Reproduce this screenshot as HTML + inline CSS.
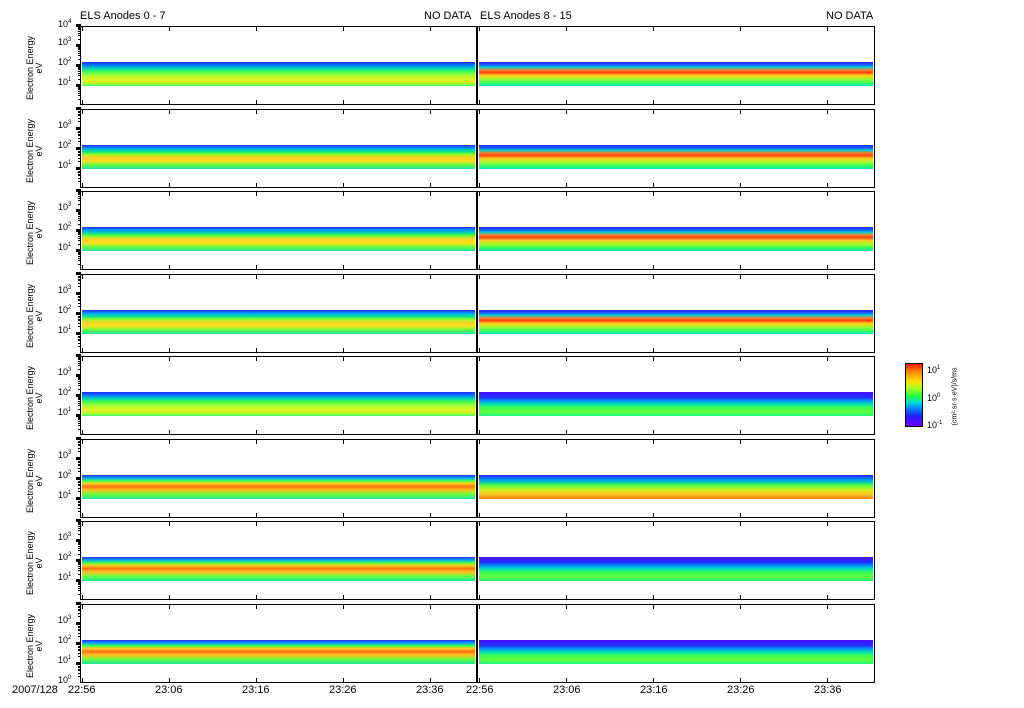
<!DOCTYPE html>
<html><head><meta charset="utf-8">
<style>
body{margin:0;background:#fff;width:1024px;height:708px;position:relative;overflow:hidden;font-family:"Liberation Sans",sans-serif;color:#000}
.p{position:absolute;border:1px solid #000;box-sizing:border-box;background:#fff}
.b{position:absolute;left:1px;right:1px}
.t{position:absolute;font-size:11px;white-space:nowrap}
.tk{position:absolute;background:#000}
.yl{position:absolute;font-size:9px;transform:rotate(-90deg);transform-origin:center;white-space:nowrap;text-align:center;line-height:9px}
.lab{position:absolute;font-size:9px}
.lab sup{font-size:6px}
</style></head><body>
<div class="t" style="left:80px;top:10px">ELS Anodes 0 - 7</div>
<div class="t" style="left:424px;top:10px">NO DATA</div>
<div class="t" style="left:480px;top:10px">ELS Anodes 8 - 15</div>
<div class="t" style="left:826px;top:10px">NO DATA</div>
<div id="c"></div>
<div class="t" style="left:12px;top:684px">2007/128</div>
<div style="position:absolute;left:905px;top:363px;width:18px;height:64px;border:1px solid #000;box-sizing:border-box;background:linear-gradient(#ff1a00,#ff8000 12%,#ffe000 28%,#a0ff20 40%,#20ff40 52%,#00e0d0 62%,#0080ff 72%,#2020ff 84%,#7000ff)"></div>
<div class="lab" style="left:927px;top:365px">10<sup>1</sup></div>
<div class="lab" style="left:927px;top:393px">10<sup>0</sup></div>
<div class="lab" style="left:927px;top:420px">10<sup>-1</sup></div>
<div class="yl" style="left:900px;top:392px;width:110px;font-size:7px">(cm²·sr·s·eV)/s/ms</div>
<script>
var c=document.getElementById('c'),h='';
var L='linear-gradient(#2a2aff,#0080ff 14%,#00d0c0 26%,#40ff50 40%,#b0ff30 58%,#e8f020 78%,#a0ff30 92%,#30f080)';
var LY='linear-gradient(#2a2aff,#00a0ff 14%,#00e090 26%,#80ff30 38%,#ffd020 52%,#ffe020 66%,#60ff40 84%,#20e0a0)';
var LR='linear-gradient(#2a2aff,#00a0ff 12%,#40ff50 24%,#ffd020 36%,#ff7010 48%,#ffc020 62%,#60ff40 82%,#20e0a0)';
var RR='linear-gradient(#3020ff,#1060ff 12%,#00d0d0 22%,#ff8020 34%,#ff4010 44%,#ffd020 56%,#90ff30 74%,#30ff60 88%,#00e0c0)';
var RB='linear-gradient(#5010ff,#2030ff 22%,#0090ff 36%,#00e0b0 50%,#40ff50 66%,#60ff40 84%,#20f080)';
var RY='linear-gradient(#3020ff,#0080ff 16%,#00d0b0 30%,#60ff40 44%,#d0f020 62%,#ffc020 82%,#ff8010)';
var lg=[L,LY,LY,LY,L,LR,LR,LR], rg=[RR,RR,RR,RR,RB,RY,RB,RB];
var times=['22:56','23:06','23:16','23:26','23:36'];
for(var i=0;i<8;i++){
 var py=26+i*82.5, H=79;
 [[80,397,lg[i]],[477,398,rg[i]]].forEach(function(a,k){
  h+='<div class="p" style="left:'+a[0]+'px;top:'+py+'px;width:'+a[1]+'px;height:'+H+'px">';
  h+='<div class="b" style="top:35px;height:24px;background:'+a[2]+'"></div>';
  h+='</div>';
  for(var j=0;j<5;j++){var x=a[0]+2+j*87;
   h+='<div class="tk" style="left:'+x+'px;top:'+py+'px;width:1px;height:5px"></div>';
   h+='<div class="tk" style="left:'+x+'px;top:'+(py+H-5)+'px;width:1px;height:5px"></div>';}
 });
 for(var d=0;d<4;d++){var y=py+H-20*d-20;
  h+='<div class="tk" style="left:76px;top:'+(y-1)+'px;width:5px;height:3px"></div>';
  for(var m=1;m<9;m++){var yy=y+20-20*Math.log10(m+1);h+='<div class="tk" style="left:78px;top:'+yy+'px;width:3px;height:1px"></div>';}
 }
 var labs=[[3,py+13],[2,py+33],[1,py+53]];
 if(i==0)labs.unshift([4,py-5]);
 if(i==7)labs.push([0,py+73]);
 labs.forEach(function(l){h+='<div class="lab" style="left:58px;top:'+(l[1]-2)+'px">10<sup>'+l[0]+'</sup></div>';});
 h+='<div class="yl" style="left:-5px;top:'+(py+33)+'px;width:80px">Electron Energy<br>eV</div>';
}
for(var j=0;j<5;j++){
 h+='<div class="t" style="left:'+(68+j*87)+'px;top:684px">'+times[j]+'</div>';
 h+='<div class="t" style="left:'+(466+j*87)+'px;top:684px">'+times[j]+'</div>';
}
c.innerHTML=h;
</script>
</body></html>
